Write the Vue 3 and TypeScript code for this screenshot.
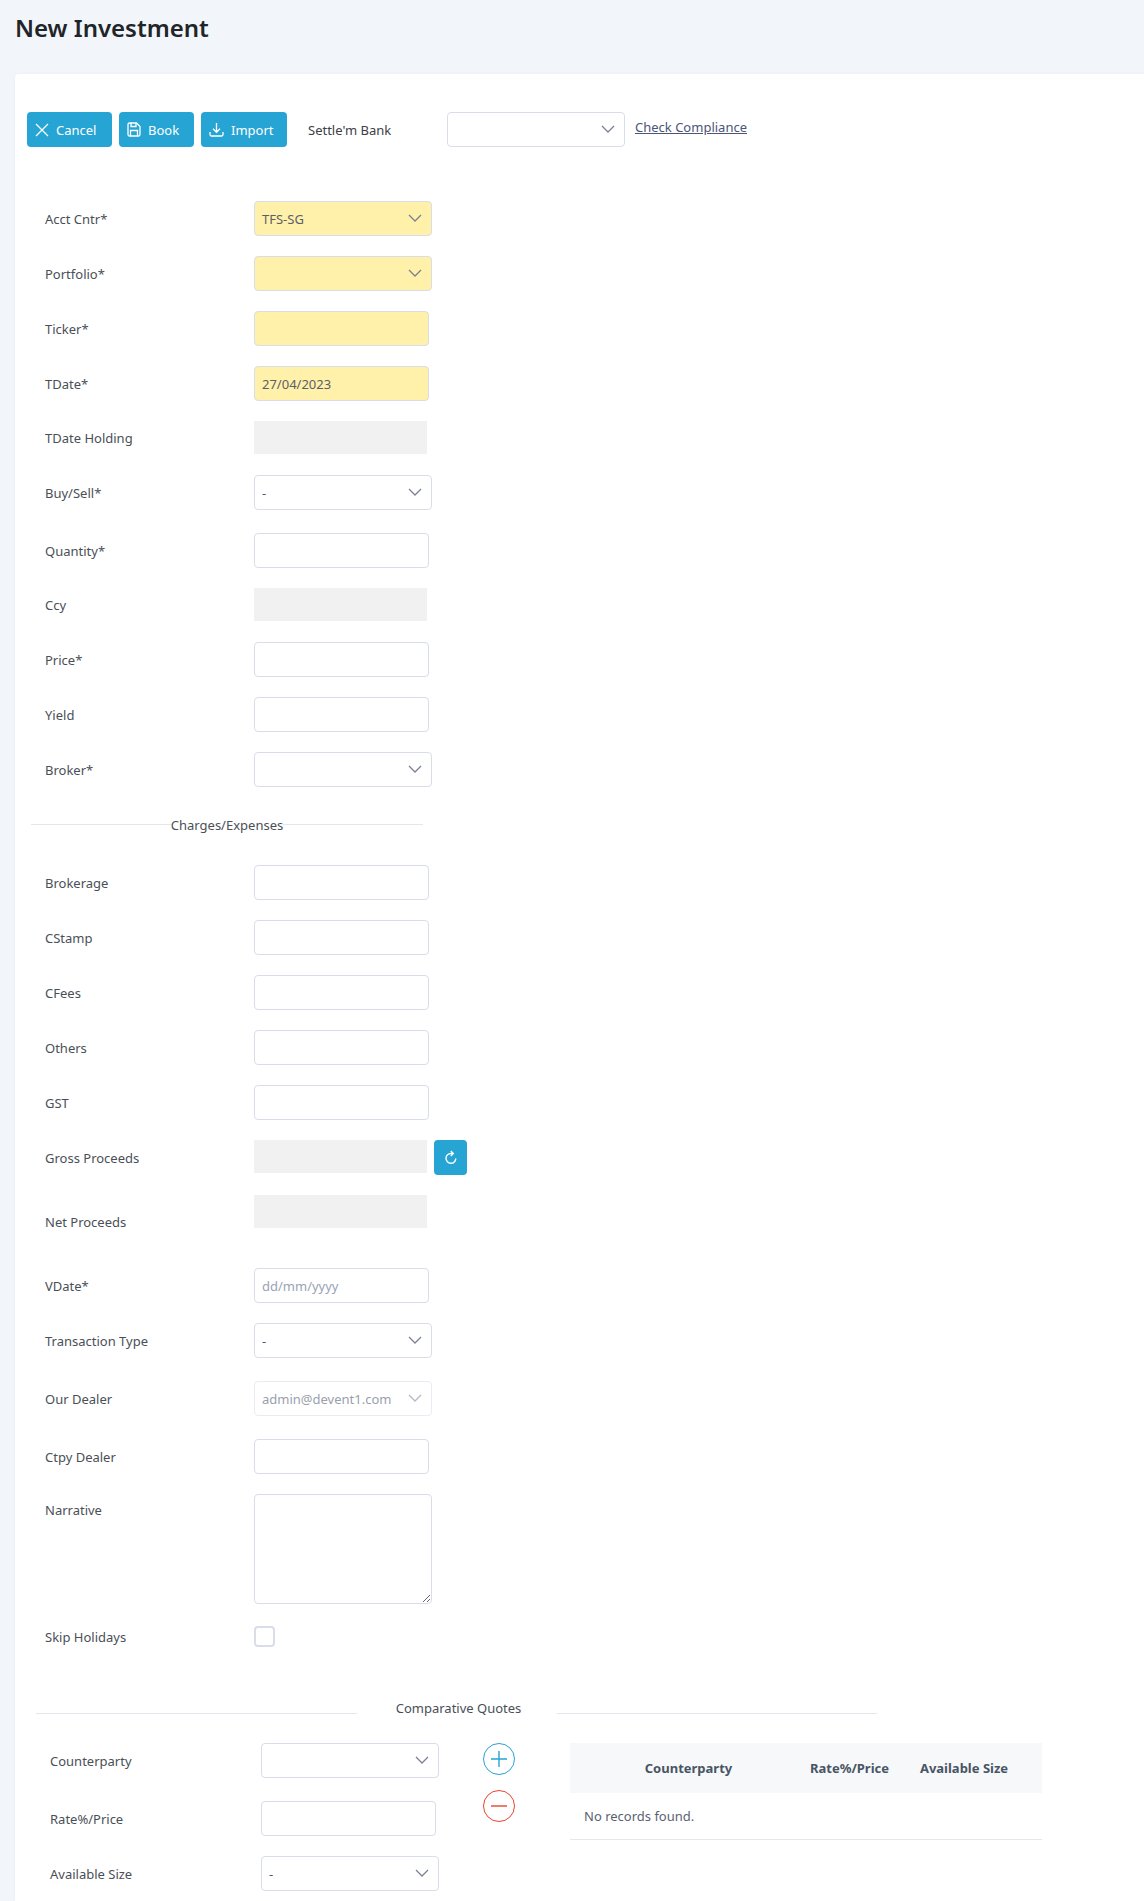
<template>
  <div class="page">
    <h1 class="title">New Investment</h1>
    <div class="card">
      <div class="toolbar">
        <button class="btn btn-cancel">
          <svg width="14" height="14" viewBox="0 0 14 14"><path d="M1 1l12 12M13 1L1 13" fill="none" stroke="currentColor" stroke-width="1.3" /></svg>
          Cancel
        </button>
        <button class="btn btn-book">
          <svg width="14" height="15" viewBox="0 0 14 15" fill="none" stroke="currentColor" stroke-width="1.3"><path d="M2.5 1h7L13 4.5v8a1.5 1.5 0 0 1-1.5 1.5h-9A1.5 1.5 0 0 1 1 12.500v-10A1.5 1.5 0 0 1 2.5 1z" /><path d="M4 1v3.500h5V1M3.500 14V8.500h7V14" /></svg>
          Book
        </button>
        <button class="btn btn-import">
          <svg width="15" height="15" viewBox="0 0 15 15" fill="none" stroke="currentColor" stroke-width="1.3"><path d="M7.500 1v9M4 6.800l3.500 3.500L11 6.800M1 10v2.500A1.500 1.500 0 0 0 2.500 14h10a1.500 1.500 0 0 0 1.500-1.500V10" /></svg>
          Import
        </button>
        <span class="settle-label">Settle'm Bank</span>
        <div class="control select">
          <svg class="chevron" width="14" height="8" viewBox="0 0 14 8"><path d="M1 1l6 6 6-6" fill="none" stroke="currentColor" stroke-width="1.300" /></svg>
        </div>
        <a class="compliance" href="#">Check Compliance</a>
      </div>

      <div class="fields">
        <template v-for="f in topFields" :key="f.label">
          <div :class="['row', f.gap]">
            <label class="label">{{ f.label }}</label>
            <div v-if="f.type === 'select'" :class="['control', 'select', { required: f.required }]">
              <span :class="{ dash: f.value === '-' }">{{ f.value }}</span>
              <svg class="chevron" width="14" height="8" viewBox="0 0 14 8"><path d="M1 1l6 6 6-6" fill="none" stroke="currentColor" stroke-width="1.300" /></svg>
            </div>
            <div v-else-if="f.type === 'disabled'" class="control disabled"></div>
            <input v-else :class="['control', 'input', { required: f.required }]" type="text" :value="f.value" />
          </div>
        </template>

        <div class="divider">
          <span class="line"></span>
          <span>Charges/Expenses</span>
          <span class="line"></span>
        </div>

        <div v-for="name in charges" :key="name" class="row">
          <label class="label">{{ name }}</label>
          <input class="control input" type="text" />
        </div>

        <div class="row row-gross">
          <label class="label">Gross Proceeds</label>
          <div class="control disabled"></div>
          <button class="btn-refresh">
            <svg width="14" height="15" viewBox="0 0 14 15" fill="none" stroke="currentColor" stroke-width="1.400"><path d="M11.800 8.500A4.900 4.900 0 1 1 7 3.500h2" /><path d="M6.800 1L9.300 3.500 6.800 6" /></svg>
          </button>
        </div>

        <div class="row row-net">
          <label class="label label-low">Net Proceeds</label>
          <div class="control disabled"></div>
        </div>

        <div class="row">
          <label class="label">VDate*</label>
          <input class="control input" type="text" placeholder="dd/mm/yyyy" />
        </div>

        <div class="row gap-23">
          <label class="label">Transaction Type</label>
          <div class="control select">
            <span class="dash">-</span>
            <svg class="chevron" width="14" height="8" viewBox="0 0 14 8"><path d="M1 1l6 6 6-6" fill="none" stroke="currentColor" stroke-width="1.300" /></svg>
          </div>
        </div>

        <div class="row gap-23">
          <label class="label">Our Dealer</label>
          <div class="control select muted">
            <span>admin@devent1.com</span>
            <svg class="chevron" width="14" height="8" viewBox="0 0 14 8"><path d="M1 1l6 6 6-6" fill="none" stroke="currentColor" stroke-width="1.300" /></svg>
          </div>
        </div>

        <div class="row">
          <label class="label">Ctpy Dealer</label>
          <input class="control input" type="text" />
        </div>

        <div class="row row-narrative">
          <label class="label label-top">Narrative</label>
          <textarea class="control narrative"></textarea>
        </div>

        <div class="row">
          <label class="label">Skip Holidays</label>
          <span class="checkbox"></span>
        </div>
      </div>

      <div class="quotes-divider">
        <span class="line"></span>
        <span class="quotes-title">Comparative Quotes</span>
        <span class="line"></span>
      </div>

      <div class="quotes">
        <div class="quote-form">
          <div class="row gap-23">
            <label class="label label-quote">Counterparty</label>
            <div class="control select">
              <svg class="chevron" width="14" height="8" viewBox="0 0 14 8"><path d="M1 1l6 6 6-6" fill="none" stroke="currentColor" stroke-width="1.300" /></svg>
            </div>
          </div>
          <div class="row">
            <label class="label label-quote">Rate%/Price</label>
            <input class="control input" type="text" />
          </div>
          <div class="row gap-none">
            <label class="label label-quote">Available Size</label>
            <div class="control select">
              <span class="dash">-</span>
              <svg class="chevron" width="14" height="8" viewBox="0 0 14 8"><path d="M1 1l6 6 6-6" fill="none" stroke="currentColor" stroke-width="1.300" /></svg>
            </div>
          </div>
        </div>

        <div class="quote-actions">
          <button class="round add">
            <svg width="18" height="18" viewBox="0 0 18 18"><path d="M9 1v16M1 9h16" fill="none" stroke="currentColor" stroke-width="1.400" /></svg>
          </button>
          <button class="round remove">
            <svg width="18" height="18" viewBox="0 0 18 18"><path d="M1 9h16" fill="none" stroke="currentColor" stroke-width="1.400" /></svg>
          </button>
        </div>

        <div class="table">
          <div class="thead">
            <span>Counterparty</span>
            <span>Rate%/Price</span>
            <span>Available Size</span>
          </div>
          <div class="empty">No records found.</div>
        </div>
      </div>
    </div>
  </div>
</template>

<script setup lang="ts">
interface Field {
  label: string
  type: 'select' | 'input' | 'disabled'
  value?: string
  required?: boolean
  gap?: string
}

const topFields: Field[] = [
  { label: 'Acct Cntr*', type: 'select', value: 'TFS-SG', required: true },
  { label: 'Portfolio*', type: 'select', required: true },
  { label: 'Ticker*', type: 'input', required: true },
  { label: 'TDate*', type: 'input', value: '27/04/2023', required: true },
  { label: 'TDate Holding', type: 'disabled', gap: 'gap-21' },
  { label: 'Buy/Sell*', type: 'select', value: '-', gap: 'gap-23' },
  { label: 'Quantity*', type: 'input' },
  { label: 'Ccy', type: 'disabled', gap: 'gap-21' },
  { label: 'Price*', type: 'input' },
  { label: 'Yield', type: 'input' },
  { label: 'Broker*', type: 'select' },
]

const charges = ['Brokerage', 'CStamp', 'CFees', 'Others', 'GST']
</script>

<style>
html,
body {
  margin: 0;
  background: #f2f6fa;
}
</style>

<style scoped>
.page {
  height: 1901px;
  overflow: hidden;
  background: #f2f6fa;
  font-family: "Noto Sans", "Open Sans", sans-serif;
  font-size: 13px;
  color: #4a4f57;
}

.title {
  margin: 0;
  height: 74px;
  padding: 11px 0 0 15px;
  box-sizing: border-box;
  font-size: 24px;
  font-weight: 600;
  line-height: 33px;
  color: #212529;
}

.card {
  margin-left: 15px;
  height: 1827px;
  box-sizing: border-box;
  padding-top: 38px;
  background: #fff;
  border-radius: 4px 0 0 0;
  box-shadow: 0 0 4px rgba(0, 0, 0, 0.04);
}

.toolbar {
  display: flex;
  align-items: center;
  height: 35px;
  padding-left: 12px;
}

.btn {
  display: flex;
  align-items: center;
  height: 35px;
  padding: 0 0 0 8px;
  margin-right: 7px;
  gap: 7px;
  box-sizing: border-box;
  border: none;
  border-radius: 4px;
  background: #26a4d4;
  color: #fff;
  font: inherit;
}

.btn-cancel { width: 85px; }
.btn-book { width: 75px; }
.btn-import { width: 86px; margin-right: 21px; }

.settle-label {
  width: 139px;
  color: #3c4046;
}

.compliance {
  margin: -6px 0 0 10px;
  color: #4a5578;
  text-decoration: underline;
}

.fields {
  padding-top: 54px;
}

.row {
  display: flex;
  align-items: center;
  margin-bottom: 20px;
}

.gap-21 { margin-bottom: 21px; }
.gap-22 { margin-bottom: 22px; }
.gap-23 { margin-bottom: 23px; }
.gap-none { margin-bottom: 0; }

.label {
  flex: none;
  width: 209px;
  margin-left: 30px;
}

.control {
  flex: none;
  box-sizing: border-box;
  height: 35px;
  border: 1px solid #d8dde8;
  border-radius: 4px;
  background: #fff;
  font: inherit;
  color: #5b6068;
}

.input {
  width: 175px;
  padding: 0 7px;
  outline: none;
}

.input::placeholder {
  color: #9aa3b5;
}

.select {
  position: relative;
  display: flex;
  align-items: center;
  width: 178px;
  padding: 0 7px;
}

.chevron {
  position: absolute;
  right: 9px;
  top: 12px;
  color: #7b8296;
}

.dash {
  color: #4a5578;
}

.required {
  background: #fff0aa;
}

.muted {
  border-color: #e9ecf2;
  color: #9aa0ad;
}

.muted .chevron {
  color: #b4b9c6;
}

.disabled {
  width: 173px;
  height: 33px;
  border: none;
  border-radius: 0;
  background: #f1f1f1;
  margin-right: 7px;
}

.btn-refresh {
  display: flex;
  align-items: center;
  justify-content: center;
  width: 33px;
  height: 35px;
  padding: 0;
  border: none;
  border-radius: 4px;
  background: #26a4d4;
  color: #fff;
}

.row-gross .disabled {
  align-self: flex-start;
}

.row-net {
  height: 33px;
  margin-bottom: 40px;
  align-items: flex-start;
}

.label-low {
  padding-top: 18px;
  line-height: 18px;
}

.divider {
  display: flex;
  align-items: center;
  width: 392px;
  margin: 28px 0 32px 16px;
  height: 18px;
}

.divider > span:nth-child(2) {
  padding-top: 1px;
}

.line {
  flex: 1;
  height: 1px;
  background: #e3e6ec;
}

.row-narrative {
  align-items: flex-start;
  margin-bottom: 22px;
}

.label-top {
  padding-top: 7px;
  line-height: 18px;
}

.narrative {
  display: block;
  width: 178px;
  height: 110px;
  padding: 8px;
  resize: vertical;
  outline: none;
}

.checkbox {
  display: block;
  box-sizing: border-box;
  width: 21px;
  height: 21px;
  border: 2px solid #d8dde8;
  border-radius: 4px;
}

.quotes-divider {
  display: flex;
  align-items: center;
  width: 841px;
  margin: 51px 0 0 21px;
  height: 20px;
}

.quotes-divider .line {
  margin-top: 10px;
}

.quotes-title {
  width: 200px;
  padding-left: 4px;
  box-sizing: border-box;
  text-align: center;
}

.quotes {
  display: flex;
  align-items: flex-start;
  margin-top: 25px;
}

.quote-form {
  flex: none;
}

.label-quote {
  margin-left: 35px;
  width: 211px;
}

.quote-actions {
  display: flex;
  flex-direction: column;
  gap: 15px;
  margin-left: 44px;
}

.round {
  display: flex;
  align-items: center;
  justify-content: center;
  width: 32px;
  height: 32px;
  padding: 0;
  border: 1px solid currentColor;
  border-radius: 50%;
  background: #fff;
}

.add { color: #26a4d4; }
.remove { color: #e8452c; }

.table {
  width: 472px;
  margin-left: 55px;
}

.thead {
  display: grid;
  grid-template-columns: 237px 85px 1fr;
  align-items: center;
  height: 50px;
  padding-right: 6px;
  text-align: center;
  font-weight: 700;
  color: #495565;
  background: #f7f8fa;
}

.empty {
  display: flex;
  align-items: center;
  height: 47px;
  padding-left: 14px;
  box-sizing: border-box;
  color: #5a6272;
  border-bottom: 1px solid #e6e8ec;
}
</style>
